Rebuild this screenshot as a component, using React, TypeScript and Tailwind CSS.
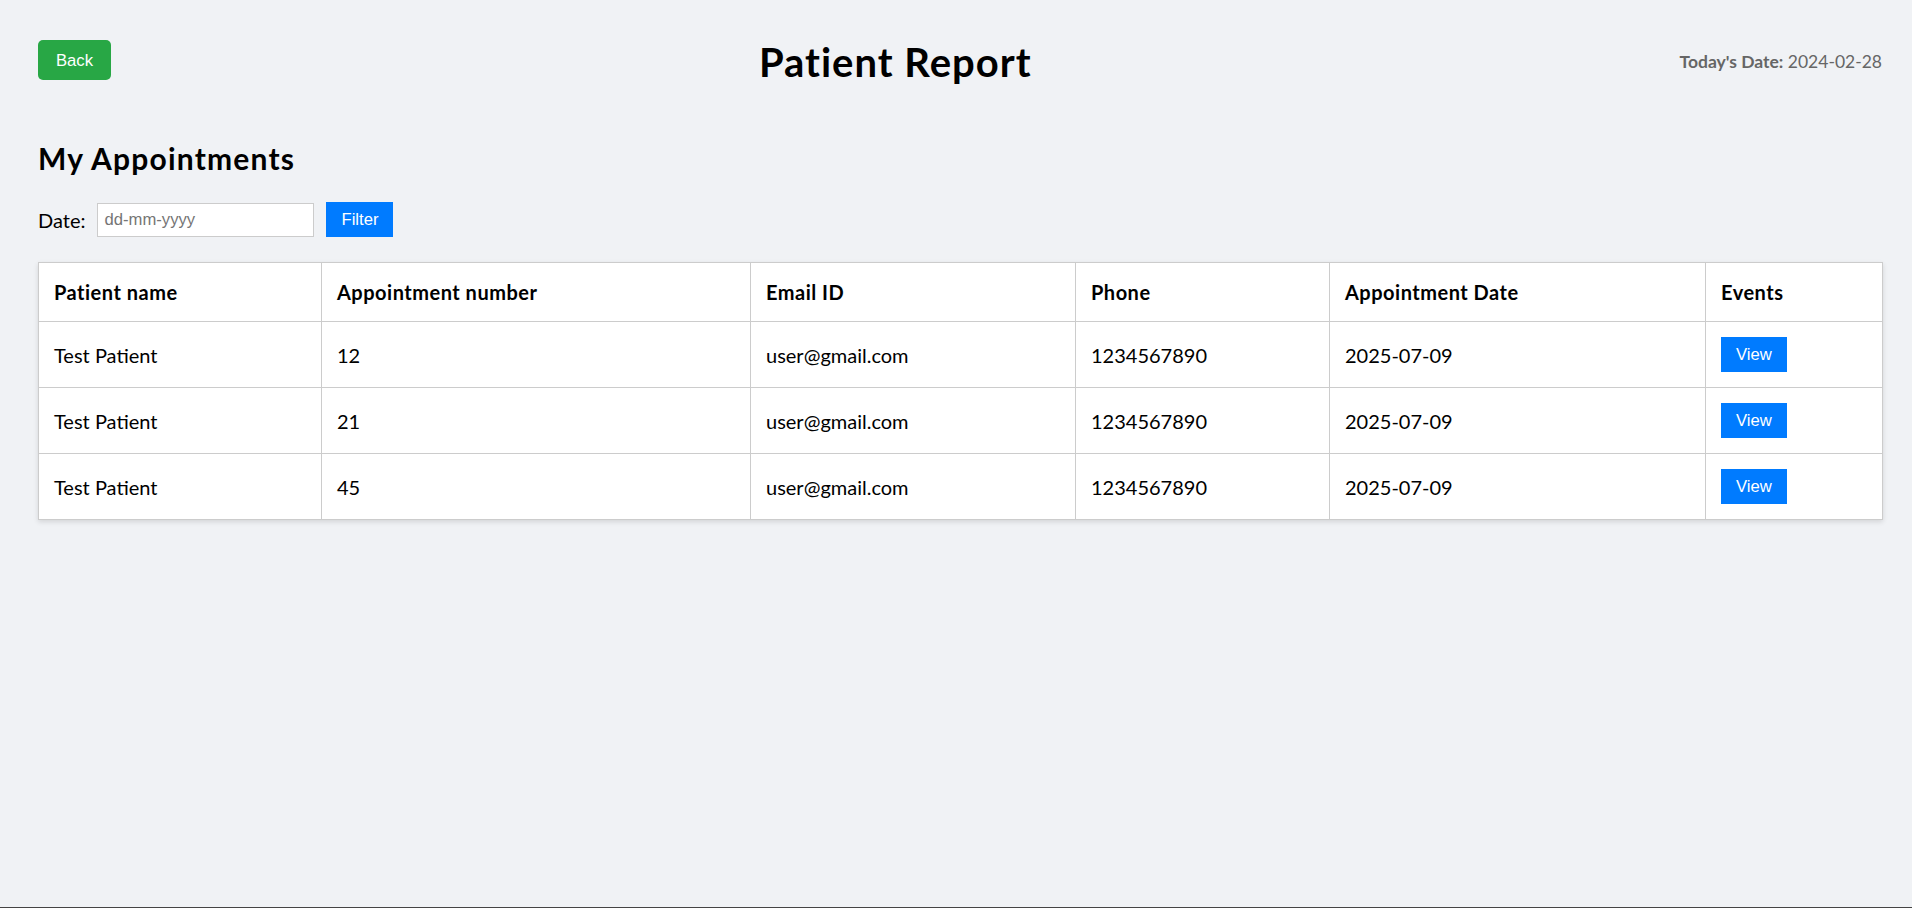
import React from "react";

type Appointment = {
  name: string;
  number: string;
  email: string;
  phone: string;
  date: string;
};

const appointments: Appointment[] = [
  { name: "Test Patient", number: "12", email: "user@gmail.com", phone: "1234567890", date: "2025-07-09" },
  { name: "Test Patient", number: "21", email: "user@gmail.com", phone: "1234567890", date: "2025-07-09" },
  { name: "Test Patient", number: "45", email: "user@gmail.com", phone: "1234567890", date: "2025-07-09" },
];

const headers = ["Patient name", "Appointment number", "Email ID", "Phone", "Appointment Date", "Events"];

export default function App() {
  return (
    <div className="flex min-h-[908px] flex-col bg-[#f0f2f5] font-['Lato','Noto_Sans',sans-serif] text-black">
      <div className="flex-1 pl-[38px] pr-[30px] pt-[20px]">
        {/* Top bar */}
        <header className="flex h-[80px] items-center justify-between">
          <button
            type="button"
            className="h-[40px] rounded-[5px] bg-[#28a745] px-[18px] font-['Liberation_Sans',Arial,sans-serif] text-[16.67px] text-white"
          >
            Back
          </button>
          <h1 className="pt-[5px] text-[40px] font-bold leading-[53px] tracking-[0.025em]">Patient Report</h1>
          <p className="pt-[5px] text-[17.5px] text-[#666]">
            <span className="font-bold">Today's Date:</span> 2024-02-28
          </p>
        </header>

        <h2 className="mt-[38px] text-[30px] font-bold leading-[40px] tracking-[0.04em]">My Appointments</h2>

        {/* Filter */}
        <div className="mt-[24px] flex items-center">
          <label className="text-[20px] leading-[28px]">Date:</label>
          <input
            type="text"
            placeholder="dd-mm-yyyy"
            className="ml-[12px] h-[34px] w-[217px] border border-[#ccc] bg-white px-[6px] font-['Liberation_Sans',Arial,sans-serif] text-[16.67px] text-black outline-none placeholder:text-[#757575]"
          />
          <button
            type="button"
            className="ml-[12px] h-[35px] bg-[#007bff] px-[15px] font-['Liberation_Sans',Arial,sans-serif] text-[16.67px] text-white"
          >
            Filter
          </button>
        </div>

        {/* Table */}
        <table className="mt-[25px] w-full table-fixed border-collapse bg-white text-[20px] shadow-[0_2px_5px_rgba(0,0,0,0.12)]">
          <colgroup>
            <col className="w-[283px]" />
            <col className="w-[429px]" />
            <col className="w-[325px]" />
            <col className="w-[254px]" />
            <col className="w-[376px]" />
            <col className="w-[177px]" />
          </colgroup>
          <thead>
            <tr>
              {headers.map((h) => (
                <th
                  key={h}
                  className="border border-[#ccc] px-[15px] py-[15px] text-left font-bold leading-[28px] tracking-[0.025em]"
                >
                  {h}
                </th>
              ))}
            </tr>
          </thead>
          <tbody>
            {appointments.map((a, i) => (
              <tr key={i}>
                <td className="border border-[#ccc] px-[15px] py-[15px] leading-[28px]">{a.name}</td>
                <td className="border border-[#ccc] px-[15px] py-[15px] leading-[28px]">{a.number}</td>
                <td className="border border-[#ccc] px-[15px] py-[15px] leading-[28px]">{a.email}</td>
                <td className="border border-[#ccc] px-[15px] py-[15px] leading-[28px]">{a.phone}</td>
                <td className="border border-[#ccc] px-[15px] py-[15px] leading-[28px]">{a.date}</td>
                <td className="border border-[#ccc] px-[15px] py-[15px] leading-[28px]">
                  <button
                    type="button"
                    className="block h-[35px] bg-[#007bff] px-[15px] font-['Liberation_Sans',Arial,sans-serif] text-[16.67px] text-white"
                  >
                    View
                  </button>
                </td>
              </tr>
            ))}
          </tbody>
        </table>
      </div>
      <div className="h-px bg-[#444]" />
    </div>
  );
}
